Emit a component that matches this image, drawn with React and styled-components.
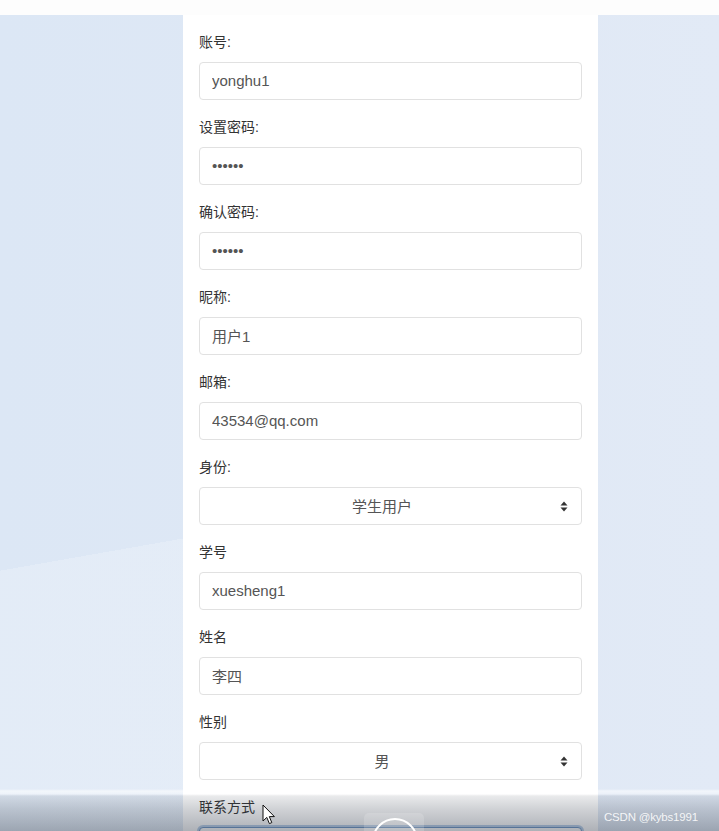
import React from "react";
import styled, { createGlobalStyle } from "styled-components";

const Global = createGlobalStyle`
  html, body { margin: 0; padding: 0; }
  body {
    font-family: "Liberation Sans", Arial, "Noto Sans CJK SC", sans-serif;
    background: #dfe8f5;
  }
`;

const Page = styled.div`
  position: relative;
  width: 719px;
  height: 831px;
  overflow: hidden;
  display: flex;
  flex-direction: column;
`;

const TopStrip = styled.div`
  height: 15px;
  flex: none;
  background: #fdfdfd;
`;

const Stage = styled.div`
  flex: 1;
  display: flex;
  padding-left: 183px;
  background:
    linear-gradient(170deg, rgba(255,255,255,0) 61.8%, rgba(255,255,255,0.2) 61.8%) left top / 183px 100% no-repeat,
    linear-gradient(90deg, #dce7f5 0%, #dfe8f5 60%, #e2eaf6 100%);
`;

const Panel = styled.div`
  width: 415px;
  box-sizing: border-box;
  background: #ffffff;
  padding: 17px 16px 0;
`;

const Field = styled.div`
  margin-bottom: 17px;
`;

const Label = styled.div`
  font-size: 14px;
  line-height: 20px;
  height: 20px;
  color: #333;
  margin-bottom: 10px;
  font-family: "Liberation Sans", "Noto Sans CJK SC", sans-serif;
`;

const Input = styled.input`
  display: block;
  width: 100%;
  box-sizing: border-box;
  height: 38px;
  padding: 0 12px 2px;
  border: 1px solid ${(p) => (p.$focused ? "#6f97c6" : "#e1e1e1")};
  border-radius: 4px;
  box-shadow: ${(p) =>
    p.$focused ? "0 0 0 2px rgba(102,150,210,0.45)" : "none"};
  background: #fff;
  font-size: 15px;
  color: #555;
  font-family: "Liberation Sans", "Noto Sans CJK SC", sans-serif;
  outline: none;
`;

const SelectBox = styled.div`
  position: relative;
  height: 38px;
  box-sizing: border-box;
  border: 1px solid #e1e1e1;
  border-radius: 4px;
  background: #fff;
  display: flex;
  align-items: center;
  justify-content: center;
  padding: 0 29px 2px 12px;
  font-size: 15px;
  color: #555;
  font-family: "Liberation Sans", "Noto Sans CJK SC", sans-serif;
`;

const Caret = styled.svg`
  position: absolute;
  right: 13px;
  top: 13px;
`;

const Shade = styled.div`
  position: absolute;
  left: 0;
  right: 0;
  top: 789px;
  bottom: 0;
  pointer-events: none;
  background: linear-gradient(
    to bottom,
    rgba(255,255,255,0) 0px,
    rgba(255,255,255,0.55) 2px,
    rgba(255,255,255,0.35) 5px,
    rgba(40,50,65,0.1) 7px,
    rgba(40,50,65,0.22) 20px,
    rgba(40,50,65,0.38) 100%
  );
`;

const PlayPad = styled.div`
  position: absolute;
  left: 364px;
  top: 813px;
  width: 60px;
  height: 40px;
  border-radius: 5px;
  background: rgba(255,255,255,0.16);
`;

const PlayRing = styled.div`
  position: absolute;
  left: 372px;
  top: 818px;
  width: 42px;
  height: 42px;
  border-radius: 50%;
  border: 2px solid #fff;
`;

const Cursor = styled.svg`
  position: absolute;
  left: 262px;
  top: 804px;
`;

const Watermark = styled.div`
  position: absolute;
  left: 604px;
  top: 810px;
  font-size: 11.5px;
  line-height: 14px;
  color: rgba(255,255,255,0.88);
  font-family: "Liberation Sans", Arial, sans-serif;
  letter-spacing: -0.2px;
`;

const fields = [
  { label: "账号:", value: "yonghu1" },
  { label: "设置密码:", value: "123456", type: "password" },
  { label: "确认密码:", value: "123456", type: "password" },
  { label: "昵称:", value: "用户1" },
  { label: "邮箱:", value: "43534@qq.com" },
  { label: "身份:", value: "学生用户", select: true },
  { label: "学号", value: "xuesheng1" },
  { label: "姓名", value: "李四" },
  { label: "性别", value: "男", select: true },
  { label: "联系方式", value: "", focused: true },
];

function UpDown() {
  return (
    <Caret width="8" height="11" viewBox="0 0 8 11">
      <path d="M4 0.5 L7.5 4.5 H0.5 Z" fill="#333" />
      <path d="M4 10.5 L7.5 6.5 H0.5 Z" fill="#333" />
    </Caret>
  );
}

export default function App() {
  return (
    <>
      <Global />
      <Page>
        <TopStrip />
        <Stage>
          <Panel>
            {fields.map((f, i) => (
              <Field key={i}>
                <Label>{f.label}</Label>
                {f.select ? (
                  <SelectBox>
                    {f.value}
                    <UpDown />
                  </SelectBox>
                ) : (
                  <Input
                    type={f.type || "text"}
                    value={f.value}
                    readOnly
                    $focused={f.focused}
                  />
                )}
              </Field>
            ))}
          </Panel>
        </Stage>
        <Shade />
        <PlayPad />
        <PlayRing />
        <Cursor width="14" height="22" viewBox="0 0 14 22">
          <path
            d="M1 1 L1 17 L4.8 13.4 L7.4 19.6 L9.8 18.6 L7.3 12.6 L12.4 12.6 Z"
            fill="#fff"
            stroke="#111"
            strokeWidth="1"
            strokeLinejoin="round"
          />
        </Cursor>
        <Watermark>CSDN @kybs1991</Watermark>
      </Page>
    </>
  );
}
